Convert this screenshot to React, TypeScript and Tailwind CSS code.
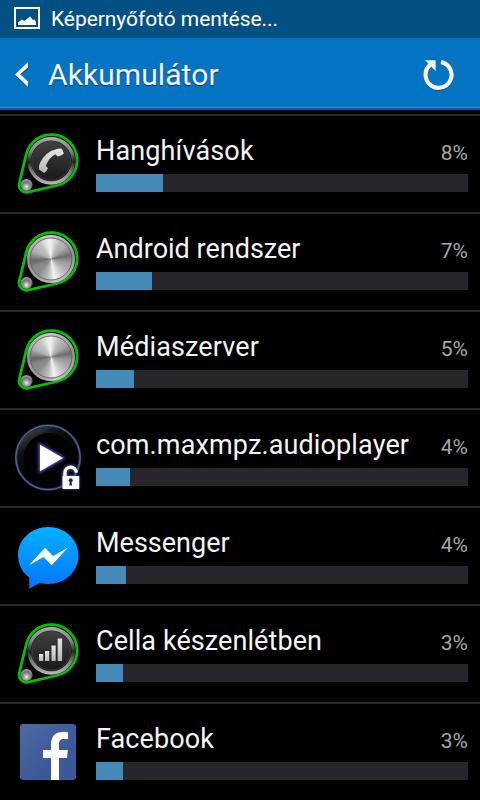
import React from "react";

type BatteryItem = {
  name: string;
  percent: number;
  barWidth: number;
  tracking: string;
  icon: React.ReactNode;
};

const Knob: React.FC<{ dark?: boolean; children?: React.ReactNode }> = ({
  dark,
  children,
}) => {
  return (
    <svg width="96" height="96" viewBox="0 0 96 96" className="block">
      <defs>
        <linearGradient id="rim" x1="0" y1="0" x2="0" y2="1">
          <stop offset="0" stopColor="#a9a9a9" />
          <stop offset="0.3" stopColor="#858585" />
          <stop offset="0.52" stopColor="#242424" />
          <stop offset="0.7" stopColor="#777" />
          <stop offset="1" stopColor="#bcbcbc" />
        </linearGradient>
        <linearGradient id="face" x1="0" y1="0" x2="0" y2="1">
          <stop offset="0" stopColor="#414141" />
          <stop offset="1" stopColor="#191919" />
        </linearGradient>
        <linearGradient id="glyph" x1="0" y1="0" x2="0" y2="1">
          <stop offset="0" stopColor="#e6e6e6" />
          <stop offset="1" stopColor="#b4b4b4" />
        </linearGradient>
        <radialGradient id="pin" cx="0.5" cy="0.65" r="0.6">
          <stop offset="0" stopColor="#f2f2f2" />
          <stop offset="0.35" stopColor="#a5a5a5" />
          <stop offset="0.7" stopColor="#6a6a6a" />
          <stop offset="1" stopColor="#9a9a9a" />
        </radialGradient>
      </defs>
      <path
        d="M26.3 38.2A25.8 25.8 0 1 1 57.1 69.5L28.1 76.1A7.3 7.3 0 0 1 19.3 67.2Z"
        fill="#030303"
        stroke="#07be07"
        strokeWidth="2.8"
      />
      {dark ? (
        <>
          <circle cx="51.2" cy="44.8" r="24" fill="url(#rim)" />
          <circle cx="51.2" cy="44.8" r="20.4" fill="#1c1c1c" />
          <circle cx="51.2" cy="44.8" r="19.3" fill="url(#face)" stroke="#4b4b4b" strokeWidth="0.6" />
        </>
      ) : (
        <>
          <foreignObject x="27" y="21" width="48" height="48">
            <div className="h-12 w-12 rounded-full bg-[conic-gradient(#efefef,#bdbdbd_25deg,#a9a9a9_50deg,#6e6e6e_80deg,#999_100deg,#b5b5b5_130deg,#d2d2d2_150deg,#f2f2f2_170deg,#bbb_190deg,#8c8c8c_220deg,#888_245deg,#666_265deg,#b0b0b0_295deg,#c4c4c4_325deg,#efefef_350deg,#efefef)]"></div>
          </foreignObject>
          <circle cx="51" cy="45" r="22.3" fill="none" stroke="#aaa" strokeWidth="3.2" opacity="0.6" />
          <circle cx="51" cy="45" r="21" fill="none" stroke="#555" strokeWidth="0.8" />
        </>
      )}
      <circle cx="26.5" cy="69" r="6" fill="url(#pin)" />
      <circle cx="26.5" cy="69" r="4.4" fill="none" stroke="#bbb" strokeWidth="0.5" opacity="0.6" />
      {children}
    </svg>
  );
};

const PhoneIcon = () => (
  <Knob dark>
    <path
      d="M58.5 32.4L62 32.8L63.9 37.6Q62.5 39 60.3 39.8L57.6 40.6L55.4 38.2Q49 41.5 45.8 49.8L48 52.3Q47 55.1 44.2 57L39 53.4Q38.5 50.3 39.8 47.3Q44.8 35.6 58.5 32.4Z"
      fill="url(#glyph)"
    />
  </Knob>
);

const SignalIcon = () => (
  <Knob dark>
    <g fill="url(#glyph)">
      <rect x="39" y="48" width="4.2" height="7" />
      <rect x="45" y="45" width="4.2" height="10" />
      <rect x="51.5" y="39.5" width="4.2" height="15.5" />
      <rect x="57.7" y="32.5" width="4.4" height="22.5" />
    </g>
  </Knob>
);

const PlayerIcon = () => (
  <svg width="96" height="96" viewBox="0 0 96 96" className="block">
    <defs>
      <linearGradient id="disc" x1="0.15" y1="0.05" x2="0.5" y2="0.6">
        <stop offset="0" stopColor="#484848" />
        <stop offset="0.45" stopColor="#111" />
        <stop offset="1" stopColor="#020202" />
      </linearGradient>
      <filter id="glow" x="-50%" y="-50%" width="200%" height="200%">
        <feGaussianBlur stdDeviation="1.7" />
      </filter>
    </defs>
    <circle cx="48" cy="47.5" r="32" fill="url(#disc)" stroke="#29345f" strokeWidth="2.6" />
    <circle cx="48" cy="47.5" r="32.2" fill="none" stroke="#5c6e9f" strokeWidth="1" />
    <circle cx="49" cy="48.5" r="25.5" fill="#020202" />
    <path d="M40 34.7L63 48L40 61.3Z" fill="#5552e0" stroke="#5552e0" strokeWidth="2.5" filter="url(#glow)" />
    <path d="M40 34.7L63 48L40 61.3Z" fill="#fff" />
    <g transform="translate(-0.3 -2)">
      <path d="M65.1 69V64.8A5.8 5.8 0 0 1 76.3 63.2" fill="none" stroke="#5350b5" strokeWidth="5" filter="url(#glow)" />
      <rect x="62.5" y="67.5" width="17" height="13.5" fill="#5350b5" filter="url(#glow)" />
      <path d="M65.2 69V65A5.6 5.6 0 0 1 76.6 64.6" fill="none" stroke="#fff" strokeWidth="3.3" />
      <rect x="62.8" y="68" width="16.7" height="13" rx="0.5" fill="#fff" />
      <circle cx="71" cy="72.2" r="2" fill="#262457" />
      <path d="M70.2 73H71.8L72.4 77.5H69.6Z" fill="#262457" />
    </g>
  </svg>
);

const MessengerIcon = () => (
  <svg width="96" height="96" viewBox="0 0 96 96" className="block">
    <defs>
      <linearGradient id="bubble" x1="0" y1="0" x2="0" y2="1">
        <stop offset="0" stopColor="#00b2ff" />
        <stop offset="1" stopColor="#0574ff" />
      </linearGradient>
    </defs>
    <path
      d="M48.3 19C31.5 19 18 31.3 18 47.2C18 56.3 22.3 64.5 29.2 69.6V80.8L39.7 75C42.4 75.7 45.3 76 48.3 76C65.2 76 78.5 63.4 78.5 47.5C78.5 31.6 65.2 19 48.3 19Z"
      fill="url(#bubble)"
    />
    <path d="M28.8 57.4L45 39.8L53 47.9L67.8 39.8L51.7 57.3L43.4 49.1Z" fill="#fff" />
  </svg>
);

const FacebookIcon = () => (
  <svg width="96" height="96" viewBox="0 0 96 96" className="block">
    <defs>
      <linearGradient id="fb" x1="0" y1="0" x2="0.6" y2="0.7">
        <stop offset="0" stopColor="#4e69a2" />
        <stop offset="1" stopColor="#3b5998" />
      </linearGradient>
    </defs>
    <rect x="20" y="20" width="56" height="56" rx="3" fill="url(#fb)" />
    <path
      d="M51 76V54H43V46H51V40.5C51 32.5 55.5 28 62.5 28C65 28 67 28.1 68 28.3V35H64C60.3 35 59 37 59 40V46H67.8L67 54H59V76Z"
      fill="#fff"
    />
  </svg>
);

const items: BatteryItem[] = [
  { name: "Hanghívások", percent: 8, barWidth: 67, tracking: "tracking-[0.14px]", icon: <PhoneIcon /> },
  { name: "Android rendszer", percent: 7, barWidth: 56, tracking: "tracking-normal", icon: <Knob /> },
  { name: "Médiaszerver", percent: 5, barWidth: 38, tracking: "tracking-[0.12px]", icon: <Knob /> },
  { name: "com.maxmpz.audioplayer", percent: 4, barWidth: 34, tracking: "tracking-[0.13px]", icon: <PlayerIcon /> },
  { name: "Messenger", percent: 4, barWidth: 30, tracking: "tracking-normal", icon: <MessengerIcon /> },
  { name: "Cella készenlétben", percent: 3, barWidth: 27, tracking: "tracking-[0.08px]", icon: <SignalIcon /> },
  { name: "Facebook", percent: 3, barWidth: 27, tracking: "tracking-[0.1px]", icon: <FacebookIcon /> },
];

const StatusBar = () => (
  <div className="flex h-[38px] items-center bg-[#035085] pl-3.5 text-white">
    <svg width="26" height="22" viewBox="0 0 26 22" className="-mt-0.5">
      <rect x="1" y="1" width="24" height="20" fill="none" stroke="#fff" strokeWidth="2" />
      <path d="M4 18V15.5L8 12.5L10.5 14L16 9.5L19 13L20.5 12.5L22 15V18Z" fill="#fff" />
    </svg>
    <span className="ml-[11px] text-[21px] leading-[38px] tracking-[-0.06px]">
      Képernyőfotó mentése...
    </span>
  </div>
);

const Header = () => (
  <div className="flex h-[72px] items-center border-b-2 border-[#0459a5] bg-[#0575c3] pl-3.5 pr-[25px] text-[#f5f5f5] shadow-[inset_0_-1px_0_#2c88d2]">
    <svg width="16" height="26" viewBox="0 0 16 26" className="mt-1">
      <path d="M14.5 1V6.5L6.7 13L14.5 20.5V26L1.2 13.7Z" fill="#17456c" />
      <path d="M14 0V5.5L6.2 12.3L14 19.5V25L1 12.5Z" fill="#f5f5f5" />
    </svg>
    <h1 className="ml-[18px] mt-[3px] flex-1 text-[30px] leading-[70px] tracking-[0.08px] [text-shadow:0_1px_1px_#06375c]">
      Akkumulátor
    </h1>
    <svg width="34" height="34" viewBox="0 0 34 34" className="mt-1">
      <path d="M20 5A13 13 0 1 1 10 7.2" fill="none" stroke="#124c79" strokeWidth="4.2" />
      <path d="M20 4.1A13 13 0 1 1 10 6.3" fill="none" stroke="#f5f5f5" strokeWidth="4.2" />
      <path d="M4 2.3H14.6V13Z" fill="#f5f5f5" />
    </svg>
  </div>
);

export default function App() {
  return (
    <div className="h-[800px] w-[480px] overflow-hidden bg-black font-['Roboto',sans-serif]">
      <StatusBar />
      <Header />
      <ul className="pt-1">
        {items.map((item) => (
          <li key={item.name} className="flex h-[98px] border-t-2 border-[#282828]">
            <div className="w-24 shrink-0">{item.icon}</div>
            <div className="flex-1 pr-3 pt-[18px]">
              <div className="flex h-10 items-baseline justify-between">
                <span className={`text-[27px] leading-[34px] text-[#f5f5f5] ${item.tracking}`}>
                  {item.name}
                </span>
                <span className="text-[21px] leading-[34px] text-[#a8a8a8]">{item.percent}%</span>
              </div>
              <div className="h-[18px] bg-[#28252c]">
                <div className="h-full bg-[#468ab7]" style={{ width: item.barWidth }}></div>
              </div>
            </div>
          </li>
        ))}
      </ul>
    </div>
  );
}
